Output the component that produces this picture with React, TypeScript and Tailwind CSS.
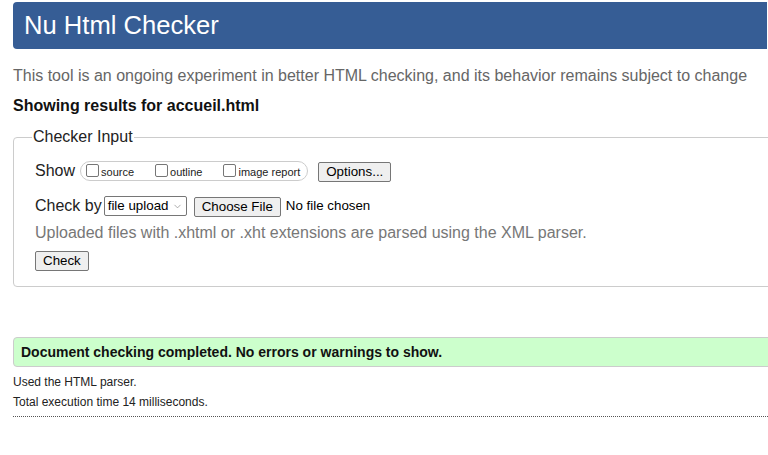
import { ChevronDown } from "lucide-react"

const font = "font-['Liberation_Sans',Arial,sans-serif]"

function Box({ label }: { label: string }) {
    return (
        <span className="flex items-end gap-[2px]">
            <span className="w-[13px] h-[13px] border border-[#767676] bg-white rounded-[2px] mb-[2px]" />
            <span className="text-[11px] leading-[13px] text-[#222]">{label}</span>
        </span>
    )
}

function Btn({ children }: { children: React.ReactNode }) {
    return (
        <button
            type="button"
            className="h-[20px] px-[7px] border border-[#767676] rounded-[2px] bg-[#efefef] text-[13.33px] leading-none text-black"
        >
            {children}
        </button>
    )
}

export default function App() {
    return (
        <div className={`w-[768px] h-[455px] overflow-hidden bg-white ${font} text-[#222]`}>
            <div className="pl-[13px] w-[820px]">
                <header className="mt-[2px] w-[754px] h-[47px] bg-[#365d95] rounded-l-[4px] flex items-center pl-[11px]">
                    <h1 className="text-[25.6px] leading-none text-white">Nu Html Checker</h1>
                </header>

                <p className="mt-[18px] text-[16px] leading-[18px] text-[#666]">
                    This tool is an ongoing experiment in better HTML checking, and its behavior remains subject to change
                </p>
                <p className="mt-[12px] text-[16px] leading-[18px] font-bold text-[#111]">
                    Showing results for accueil.html
                </p>

                <fieldset className="mt-[13px] border border-[#ccc] rounded-[4px] px-[21px] pt-[15px] pb-[15px]">
                    <legend className="-ml-[3px] px-[1px] text-[16px] leading-[18px]">Checker Input</legend>

                    <div className="flex items-center h-[20px]">
                        <span className="text-[16px] leading-none">Show</span>
                        <div className="ml-[5px] h-[20px] flex items-center gap-[21px] pl-[5px] pr-[7px] border border-[#ccc] rounded-full">
                            <Box label="source" />
                            <Box label="outline" />
                            <Box label="image report" />
                        </div>
                        <span className="ml-[10px]">
                            <Btn>Options...</Btn>
                        </span>
                    </div>

                    <div className="mt-[15px] flex items-center h-[20px]">
                        <span className="text-[16px] leading-none">Check by</span>
                        <div className="ml-[2px] w-[83px] h-[20px] border border-[#767676] rounded-[2px] bg-white flex items-center justify-between pl-[3px] pr-[3px]">
                            <span className="text-[13.33px] leading-none text-black">file upload</span>
                            <ChevronDown size={11} strokeWidth={1.5} className="text-[#888]" />
                        </div>
                        <span className="ml-[7px]">
                            <Btn>Choose File</Btn>
                        </span>
                        <span className="ml-[5px] text-[13.33px] leading-none text-black">No file chosen</span>
                    </div>

                    <p className="mt-[8px] text-[16px] leading-[18px] text-[#777]">
                        Uploaded files with .xhtml or .xht extensions are parsed using the XML parser.
                    </p>

                    <div className="mt-[9px] flex">
                        <Btn>Check</Btn>
                    </div>
                </fieldset>

                <div className="mt-[50px] h-[30px] bg-[#ccffcc] border border-[#ccc] rounded-l-[4px] flex items-center pl-[7px]">
                    <span className="text-[14px] font-bold leading-none text-[#111]">
                        Document checking completed. No errors or warnings to show.
                    </span>
                </div>

                <p className="mt-[8px] text-[12px] leading-[14px]">Used the HTML parser.</p>
                <p className="mt-[6px] text-[12px] leading-[14px]">Total execution time 14 milliseconds.</p>

                <div className="mt-[7px] border-t border-dotted border-[#555]" />
            </div>
        </div>
    )
}
